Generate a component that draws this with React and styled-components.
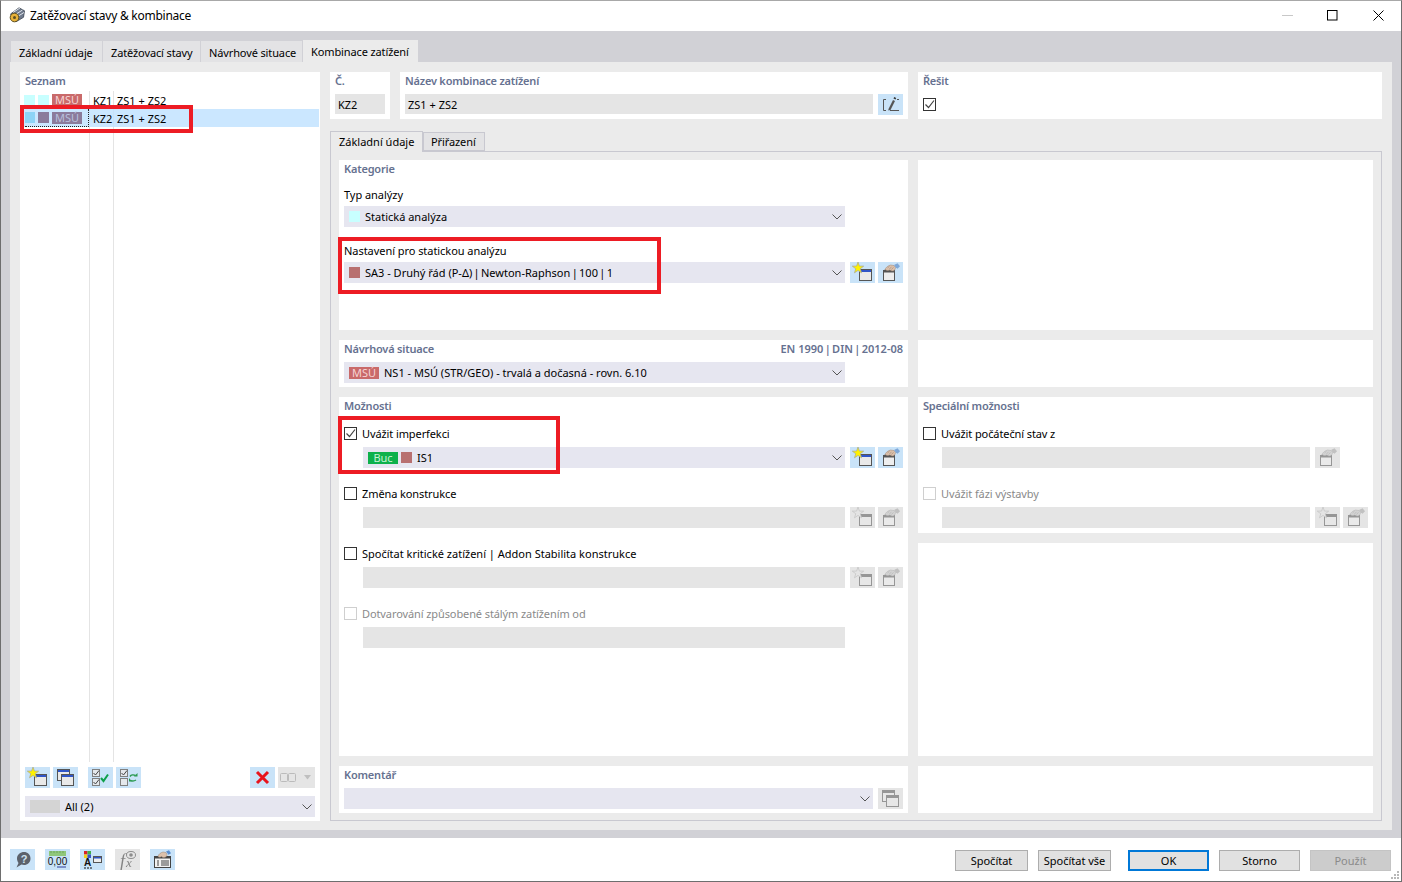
import React from "react";
import styled, { createGlobalStyle } from "styled-components";

const GlobalStyle = createGlobalStyle`
	html, body {
		margin: 0;
		padding: 0;
		background: #fff;
	}
	body {
		font-family: "Noto Sans", "Open Sans", sans-serif;
		font-size: 11px;
		color: #000;
	}
	* {
		box-sizing: border-box;
	}
`;

const Window = styled.div`
	position: relative;
	width: 1402px;
	height: 882px;
	display: flex;
	flex-direction: column;
	background: #fff;
	border: 1px solid #6e6e6e;
	border-top-color: #a8a8a8;
	overflow: hidden;
`;

const TitleBar = styled.div`
	height: 30px;
	display: flex;
	align-items: center;
	padding: 0 0 2px 8px;
	flex: none;
	background: #fff;
`;

const TitleText = styled.span`
	margin-left: 5px;
	font-size: 12px;
	letter-spacing: -0.25px;
`;

const WindowButtons = styled.div`
	margin-left: auto;
	display: flex;
	align-items: center;
	padding-right: 17px;
`;

const Band = styled.div`
	flex: 1;
	display: flex;
	flex-direction: column;
	background: #d1d1d6;
	padding: 10px 9px 8px 9px;
`;

const TabRow = styled.div`
	display: flex;
	align-items: flex-end;
	height: 21px;
	gap: 1px;
	margin-left: 1px;
	flex: none;
`;

const TopTab = styled.div`
	width: ${(p) => p.$w}px;
	height: ${(p) => (p.$active ? 22 : 21)}px;
	display: flex;
	align-items: center;
	padding-left: 8px;
	padding-top: 1px;
	letter-spacing: -0.12px;
	background: ${(p) => (p.$active ? "#ebebeb" : "#e3e3e5")};
	white-space: nowrap;
`;

const Body = styled.div`
	flex: 1;
	display: grid;
	grid-template-columns: 300px 1052px;
	column-gap: 10px;
	padding: 10px 10px 9px 10px;
	background: #ebebeb;
`;

const ListPanel = styled.div`
	display: flex;
	flex-direction: column;
	background: #fff;
	padding-bottom: 4px;
`;

const SectionTitle = styled.div`
	height: 18px;
	padding-bottom: 2px;
	display: flex;
	align-items: center;
	justify-content: space-between;
	font-weight: 600;
	letter-spacing: -0.2px;
	color: #667190;
	white-space: nowrap;
`;

const TitleNote = styled.span`
	letter-spacing: 0;
`;

const Sep = styled.span`
	margin: 0 -1.5px;
`;

const ListTitle = styled(SectionTitle)`
	height: 19px;
	padding-left: 5px;
	padding-bottom: 3px;
	flex: none;
`;

const ListBody = styled.div`
	flex: 1;
	margin-bottom: 5px;
	background-image: linear-gradient(#e4e4e4, #e4e4e4), linear-gradient(#e4e4e4, #e4e4e4);
	background-size: 1px 100%;
	background-position: 69px 0, 93px 0;
	background-repeat: no-repeat;
`;

const ListRow = styled.div`
	height: 18px;
	display: flex;
	align-items: center;
	padding-left: ${(p) => (p.$selected ? 5 : 4)}px;
	background: ${(p) => (p.$selected ? "rgba(190, 225, 255, 0.8)" : "transparent")};
	width: 299px;
`;

const Swatch = styled.span`
	width: ${(p) => p.$w || 11}px;
	height: ${(p) => p.$h || 11}px;
	margin-right: ${(p) => p.$gap ?? 3}px;
	background: ${(p) => p.$color};
	flex: none;
`;

const Badge = styled.span`
	width: ${(p) => p.$w || 30}px;
	height: 12px;
	margin-right: ${(p) => p.$gap ?? 3}px;
	display: flex;
	align-items: center;
	justify-content: center;
	font-size: 11px;
	line-height: 12px;
	color: ${(p) => p.$text || "#f6d4d4"};
	background: ${(p) => p.$color};
	flex: none;
`;

const FocusCell = styled.div`
	display: flex;
	align-items: center;
	width: 64px;
	height: 18px;
	border-bottom: 1px dotted #222;
	border-right: 1px dotted #222;
	flex: none;
`;

const PlainCell = styled.div`
	display: flex;
	align-items: center;
	width: 65px;
	flex: none;
`;

const CodeCell = styled.span`
	width: 24px;
	margin-left: 4px;
	white-space: nowrap;
	flex: none;
`;

const ListToolbar = styled.div`
	display: flex;
	align-items: center;
	padding: 0 5px;
	margin-bottom: 8px;
	flex: none;
`;

const ToolGroup = styled.div`
	display: flex;
	gap: 3px;
	margin-right: ${(p) => p.$gap || 0}px;
	margin-left: ${(p) => (p.$end ? "auto" : 0)};
`;

const IconButton = styled.div`
	width: ${(p) => p.$w || 25}px;
	height: 21px;
	display: flex;
	align-items: center;
	justify-content: center;
	background: ${(p) => (p.$off ? "#e5e5e5" : "#c9e3f8")};
	flex: none;

	svg {
		display: block;
		filter: ${(p) => (p.$off ? "grayscale(1) opacity(0.55)" : "none")};
	}
`;

const Select = styled.div`
	width: ${(p) => p.$w}px;
	height: 21px;
	margin-left: ${(p) => p.$indent || 0}px;
	display: flex;
	align-items: center;
	padding: 0 3px 0 5px;
	background: ${(p) => (p.$off ? "#e5e5e5" : "#e6e6f0")};
	white-space: nowrap;
	flex: none;

	> svg:last-child {
		margin-left: auto;
	}
`;

const ListSelect = styled(Select)`
	margin: 0 5px;
	width: 290px;
`;

const RightColumn = styled.div`
	display: flex;
	flex-direction: column;
`;

const HeaderRow = styled.div`
	display: grid;
	grid-template-columns: 60px 508px 464px;
	column-gap: 10px;
	height: 47px;
	flex: none;
`;

const Panel = styled.div`
	background: #fff;
	padding: 0 5px;
`;

const InputBox = styled.div`
	width: ${(p) => p.$w}px;
	height: 20px;
	display: flex;
	align-items: center;
	padding-left: 3px;
	background: #e5e5e5;
	flex: none;
`;

const HeaderLine = styled.div`
	display: flex;
	gap: 5px;
	margin-top: ${(p) => p.$top || 4}px;
`;

const InnerTabs = styled.div`
	display: flex;
	align-items: flex-end;
	height: 20px;
	margin-top: 12px;
	flex: none;
`;

const InnerTab = styled.div`
	width: ${(p) => p.$w}px;
	height: ${(p) => (p.$active ? 21 : 19)}px;
	display: flex;
	align-items: center;
	padding-left: ${(p) => (p.$active ? 8 : 7)}px;
	padding-bottom: ${(p) => (p.$active ? 1 : 0)}px;
	letter-spacing: ${(p) => (p.$active ? 0 : "-0.1px")};
	background: ${(p) => (p.$active ? "#ebebeb" : "#e3e3e5")};
	border: 1px solid #c8c8d0;
	border-bottom: ${(p) => (p.$active ? "none" : "1px solid #c8c8d0")};
	margin-bottom: ${(p) => (p.$active ? -1 : 0)}px;
	white-space: nowrap;
	position: relative;
`;

const InnerPanel = styled.div`
	flex: 1;
	display: grid;
	grid-template-columns: 569px 455px;
	grid-template-rows: 170px 47px 359px 47px;
	gap: 10px;
	padding: 8px 8px 7px 8px;
	border: 1px solid #c8c8d0;
`;

const RightStack = styled.div`
	display: flex;
	flex-direction: column;
	gap: 10px;
`;

const SpecialPanel = styled(Panel)`
	height: 136px;
	flex: none;
`;

const FillPanel = styled(Panel)`
	flex: 1;
`;

const FieldLabel = styled.div`
	height: 14px;
	display: flex;
	align-items: center;
	margin-top: ${(p) => p.$top}px;
	margin-bottom: 5px;
	letter-spacing: -0.05px;
`;

const ControlRow = styled.div`
	display: flex;
	align-items: center;
	gap: 5px;
	margin-top: ${(p) => p.$top || 0}px;
`;

const CheckRow = styled.div`
	height: 14px;
	display: flex;
	align-items: center;
	gap: 5px;
	margin-top: ${(p) => p.$top}px;
	margin-bottom: 7px;
	letter-spacing: ${(p) => (p.$wide ? 0 : "-0.1px")};
	color: ${(p) => (p.$off ? "#8a8a8a" : "#000")};
`;

const CheckBox = styled.span`
	width: 13px;
	height: 13px;
	display: flex;
	align-items: center;
	justify-content: center;
	border: 1px solid ${(p) => (p.$off ? "#cfcfcf" : "#333")};
	background: #fff;
	flex: none;
`;

const Gap = styled.span`
	width: ${(p) => p.$w}px;
	flex: none;
`;

const Footer = styled.div`
	height: 43px;
	display: flex;
	align-items: flex-start;
	padding: 11px 10px 0 9px;
	flex: none;
	background: #fff;
`;

const FooterTools = styled.div`
	display: flex;
	gap: 10px;
`;

const FooterButtons = styled.div`
	margin-left: auto;
	margin-top: 1px;
	display: flex;
	gap: 10px;
`;

const DialogButton = styled.div`
	width: ${(p) => p.$w || 81}px;
	height: 21px;
	margin-right: ${(p) => p.$gap || 0}px;
	display: flex;
	align-items: center;
	justify-content: center;
	background: ${(p) => (p.$off ? "#cccccc" : "#e1e1e1")};
	color: ${(p) => (p.$off ? "#8a8a8a" : "#000")};
	border: ${(p) => (p.$primary ? "2px solid #0078d7" : p.$off ? "1px solid #c4c4c4" : "1px solid #adadad")};
`;

const Grip = styled.svg`
	position: absolute;
	right: 1px;
	bottom: 1px;
`;

const Mark = styled.div`
	position: absolute;
	left: ${(p) => p.$x}px;
	top: ${(p) => p.$y}px;
	width: ${(p) => p.$w}px;
	height: ${(p) => p.$h}px;
	border: 4px solid #ed1c24;
	pointer-events: none;
`;

const Chevron = () => (
	<svg width="10" height="6" viewBox="0 0 10 6">
		<path d="M.5.5L5 5 9.500.5" fill="none" stroke="#555" />
	</svg>
);

const CheckGlyph = () => (
	<svg width="11" height="11" viewBox="0 0 11 11">
		<path d="M1.5 5.5l3 3L10 1.5" fill="none" stroke="#444" strokeWidth="1.2" />
	</svg>
);

const MiniWindow = ({ x, y, w = 12, h = 11 }) => (
	<>
		<rect x={x + 0.5} y={y + 0.5} width={w} height={h} fill="#e9e9e9" stroke="#555" />
		<rect x={x + 1} y={y + 1} width={w - 1} height="2" fill="#2f55c8" />
	</>
);

const NewIcon = () => (
	<svg width="25" height="21" viewBox="0 0 25 21">
		<MiniWindow x={9} y={7} />
		<path
			d="M8 0l1.410 4.060 4.290.090-3.420 2.590 1.250 4.110L8 8.400l-3.530 2.450 1.250-4.110-3.430-2.590 4.300-.090z"
			fill="#fff200"
			stroke="#a8a890"
			strokeWidth=".7"
		/>
	</svg>
);

const LibraryIcon = () => (
	<svg width="25" height="21" viewBox="0 0 25 21">
		<rect x="5.500" y="8.500" width="11" height="10" fill="#eee" stroke="#555" />
		<rect x="6" y="9" width="10" height="1.500" fill="#555" />
		<path d="M7 8c.5-2.500 2.500-4 5.500-5l3.500.5 1.500 2c0 2-1.500 3.500-3 3.500-1.500 0-2-.6-2.500-1.200-1 .8-3.500 1.200-5-.8z" fill="#dcc0aa" stroke="#9a8474" strokeWidth=".5" />
		<path d="M9.500 6l2-1.800M11.500 7l2-2.200M13.500 7.500l2-2.200" stroke="#9a8474" strokeWidth=".6" />
		<path d="M16 3l3.500-1.800 2.500 3-2.500 2.500-2-1.500z" fill="#7fa8d8" />
	</svg>
);

const EditIcon = () => (
	<svg width="25" height="21" viewBox="0 0 25 21">
		<path d="M8 5.500H5.500v11H8M12 16.500h9" fill="none" stroke="#555" />
		<path d="M10.500 15l4.500-9 2 1-4.500 9-2.200.600z" fill="#555" />
		<path d="M15.500 4.500l.7-1.500 2 1-.7 1.500z" fill="#333" />
		<path d="M19 5.500h2" stroke="#555" />
	</svg>
);

const CopyIcon = () => (
	<svg width="25" height="21" viewBox="0 0 25 21">
		<MiniWindow x={4} y={2} />
		<MiniWindow x={8} y={7} />
	</svg>
);

const SmallCheck = ({ x, y, on = true }) => (
	<>
		<rect x={x + 0.5} y={y + 0.5} width="7" height="7" fill="#e4e8ec" stroke="#808080" />
		{on && <path d={`M${x + 1.5} ${y + 4}l2 2 3.500-4.500`} fill="none" stroke="#444" />}
	</>
);

const CheckAllIcon = () => (
	<svg width="25" height="21" viewBox="0 0 25 21">
		<SmallCheck x={4} y={2} />
		<SmallCheck x={4} y={11} />
		<path d="M13 11l2.500 3 4.500-6.500" fill="none" stroke="#0fa04a" strokeWidth="2" />
	</svg>
);

const SwapIcon = () => (
	<svg width="25" height="21" viewBox="0 0 25 21">
		<SmallCheck x={4} y={2} />
		<SmallCheck x={4} y={11} on={false} />
		<path d="M14 9.500c1-1.500 3.500-2 5.500-1M20 13c-2 1.200-4 1.200-5.500.300" fill="none" stroke="#2a9a50" strokeWidth="1.400" />
		<path d="M21.500 6v3.500h-3.500zM13 11v3.500h3z" fill="#2a9a50" />
	</svg>
);

const DeleteIcon = () => (
	<svg width="25" height="21" viewBox="0 0 25 21">
		<path d="M7 5l11 11M18 5L7 16" stroke="#e8141c" strokeWidth="3" />
	</svg>
);

const SplitIcon = () => (
	<svg width="37" height="21" viewBox="0 0 37 21">
		<rect x="2.500" y="6.500" width="7" height="8" rx="1" fill="none" stroke="#999" />
		<rect x="10.500" y="6.500" width="7" height="8" rx="1" fill="none" stroke="#999" />
		<path d="M26 8h7l-3.500 4.500z" fill="#a0a0a0" />
	</svg>
);

const HelpIcon = () => (
	<svg width="25" height="21" viewBox="0 0 25 21">
		<path d="M14 3c3.500 0 6.500 2.500 6.500 6.500S17.500 16 14 16c-.9 0-1.800-.2-2.500-.5L6.500 18.500l2-4.500C7.500 12.800 7 11 7 9.500 7 5.500 10.500 3 14 3z" fill="#5c626c" />
		<text x="14" y="13.500" fontSize="11" fontWeight="700" fontFamily="Liberation Sans, sans-serif" fill="#cfe2f2" textAnchor="middle">?</text>
	</svg>
);

const UnitsIcon = () => (
	<svg width="25" height="21" viewBox="0 0 25 21">
		<rect x="4" y="2" width="17" height="5" fill="#8fc77a" />
		<path d="M6 2v2M9 2v2M12 2v2M15 2v2M18 2v2" stroke="#5f9a50" strokeWidth=".7" />
		<text x="12.500" y="16" fontSize="10" fontFamily="Liberation Sans, sans-serif" fill="#111" textAnchor="middle">0,00</text>
		<path d="M12 18h9" stroke="#2f3f9a" />
	</svg>
);

const ColorsIcon = () => (
	<svg width="25" height="21" viewBox="0 0 25 21">
		<rect x="4" y="2" width="3.500" height="3.500" fill="#d8232a" />
		<rect x="7.500" y="2" width="3.500" height="3.500" fill="#3fae49" />
		<rect x="4" y="5.500" width="3.500" height="3.500" fill="#f2d01c" />
		<rect x="7.500" y="5.500" width="3.500" height="3.500" fill="#3a55c8" />
		<text x="7.500" y="17" fontSize="10" fontWeight="700" fontFamily="Liberation Sans, sans-serif" fill="#111" textAnchor="middle">A</text>
		<path d="M4 19h2M7 19h2M10 19h2" stroke="#111" />
		<rect x="13.500" y="7.500" width="8" height="6" fill="#eee" stroke="#555" />
		<rect x="14" y="8" width="7" height="1.500" fill="#2f55c8" />
	</svg>
);

const FormulaIcon = () => (
	<svg width="25" height="21" viewBox="0 0 25 21">
		<text x="5" y="18" fontSize="18" fontStyle="italic" fontFamily="Liberation Serif, serif" fill="#333">f</text>
		<text x="11" y="18" fontSize="13" fontStyle="italic" fontFamily="Liberation Serif, serif" fill="#333">x</text>
		<ellipse cx="16" cy="6" rx="4.500" ry="3.500" fill="none" stroke="#444" />
		<circle cx="16" cy="6" r="1.800" fill="#444" />
	</svg>
);

const ReportIcon = () => (
	<svg width="25" height="21" viewBox="0 0 25 21">
		<rect x="4.500" y="7.500" width="16" height="11" fill="#f2f2f2" stroke="#444" />
		<rect x="5" y="8" width="15" height="1.500" fill="#444" />
		<path d="M7 12h2M7 14h2M7 16h2M11 12h8M11 14h8M11 16h8" stroke="#444" />
		<path d="M8 7.500c.5-2.500 3-4 5-4.500l3 .5 1 2c0 2-1.500 3-3 3-1.500 0-2-.5-2.500-1-1 .8-2.500 1-3.500 0z" fill="#dcc0aa" stroke="#9a8474" strokeWidth=".5" />
		<path d="M16 2.500l3-1.300 2 3-2.500 1.500z" fill="#5a8ed0" />
	</svg>
);

const AppIcon = () => (
	<svg width="16" height="16" viewBox="0 0 16 16">
		<path d="M1.500 7L10 .8l5.500 3-1 6.500-7.500 4.500z" fill="#6f7a8c" stroke="#39414e" strokeWidth=".8" />
		<path d="M4 5.500L11 1M6.500 7.500L13.500 3M8.500 9.500L15 5.500" stroke="#dfe4ea" />
		<circle cx="5.500" cy="10.500" r="4.300" fill="#e8b23a" stroke="#5c4f20" />
		<circle cx="5.500" cy="10.500" r="1.500" fill="#5c4f20" />
	</svg>
);

const MaximizeIcon = () => (
	<svg width="11" height="11" viewBox="0 0 11 11">
		<rect x=".5" y=".5" width="9.500" height="9.500" fill="none" stroke="#000" />
	</svg>
);

const CloseIcon = () => (
	<svg width="11" height="11" viewBox="0 0 11 11">
		<path d="M.5.5l10 10M10.500.5l-10 10" stroke="#000" />
	</svg>
);

const MinimizeIcon = () => (
	<svg width="11" height="11" viewBox="0 0 11 11">
		<path d="M0 5.500h11" stroke="#c8c8c8" />
	</svg>
);

const App = () => {
	return (
		<>
			<GlobalStyle />
			<Window>
				<TitleBar>
					<AppIcon />
					<TitleText>Zatěžovací stavy &amp; kombinace</TitleText>
					<WindowButtons>
						<MinimizeIcon />
						<Gap $w={34} />
						<MaximizeIcon />
						<Gap $w={35} />
						<CloseIcon />
					</WindowButtons>
				</TitleBar>
				<Band>
					<TabRow>
						<TopTab $w={91}>Základní údaje</TopTab>
						<TopTab $w={97}>Zatěžovací stavy</TopTab>
						<TopTab $w={101}>Návrhové situace</TopTab>
						<TopTab $w={115} $active>Kombinace zatížení</TopTab>
					</TabRow>
					<Body>
						<ListPanel>
							<ListTitle>Seznam</ListTitle>
							<ListBody>
								<ListRow>
									<PlainCell>
										<Swatch $color="#c8ffff" />
										<Swatch $color="#c8ffff" />
										<Badge $color="#c96a6a">MSÚ</Badge>
									</PlainCell>
									<CodeCell>KZ1</CodeCell>
									<span>ZS1 + ZS2</span>
								</ListRow>
								<ListRow $selected>
									<FocusCell>
										<Swatch $color="#8dd3f6" $w={10} />
										<Swatch $color="#8b7b9b" />
										<Badge $color="#8b7b9b" $text="#b8c0dc">MSÚ</Badge>
									</FocusCell>
									<CodeCell>KZ2</CodeCell>
									<span>ZS1 + ZS2</span>
								</ListRow>
							</ListBody>
							<ListToolbar>
								<ToolGroup $gap={10}>
									<IconButton><NewIcon /></IconButton>
									<IconButton><CopyIcon /></IconButton>
								</ToolGroup>
								<ToolGroup>
									<IconButton><CheckAllIcon /></IconButton>
									<IconButton><SwapIcon /></IconButton>
								</ToolGroup>
								<ToolGroup $end>
									<IconButton><DeleteIcon /></IconButton>
									<IconButton $w={37} $off><SplitIcon /></IconButton>
								</ToolGroup>
							</ListToolbar>
							<ListSelect>
								<Swatch $color="#d4d4d4" $w={30} $h={13} $gap={5} />
								All (2)
								<Chevron />
							</ListSelect>
						</ListPanel>
						<RightColumn>
							<HeaderRow>
								<Panel>
									<SectionTitle>Č.</SectionTitle>
									<HeaderLine>
										<InputBox $w={50}>KZ2</InputBox>
									</HeaderLine>
								</Panel>
								<Panel>
									<SectionTitle>Název kombinace zatížení</SectionTitle>
									<HeaderLine>
										<InputBox $w={468}>ZS1 + ZS2</InputBox>
										<IconButton><EditIcon /></IconButton>
									</HeaderLine>
								</Panel>
								<Panel>
									<SectionTitle>Řešit</SectionTitle>
									<HeaderLine $top={8}>
										<CheckBox><CheckGlyph /></CheckBox>
									</HeaderLine>
								</Panel>
							</HeaderRow>
							<InnerTabs>
								<InnerTab $w={93} $active>Základní údaje</InnerTab>
								<InnerTab $w={62}>Přiřazení</InnerTab>
							</InnerTabs>
							<InnerPanel>
								<Panel>
									<SectionTitle>Kategorie</SectionTitle>
									<FieldLabel $top={9}>Typ analýzy</FieldLabel>
									<ControlRow>
										<Select $w={501}>
											<Swatch $color="#c8ffff" $gap={5} />
											Statická analýza
											<Chevron />
										</Select>
									</ControlRow>
									<FieldLabel $top={16}>Nastavení pro statickou analýzu</FieldLabel>
									<ControlRow>
										<Select $w={501}>
											<Swatch $color="#b87070" $gap={5} />
											<span>
												SA3 - Druhý řád (P-Δ) <Sep>|</Sep> Newton-Raphson <Sep>|</Sep> 100 <Sep>|</Sep> 1
											</span>
											<Chevron />
										</Select>
										<ToolGroup>
											<IconButton><NewIcon /></IconButton>
											<IconButton><LibraryIcon /></IconButton>
										</ToolGroup>
									</ControlRow>
								</Panel>
								<Panel />
								<Panel>
									<SectionTitle>
										Návrhová situace
										<TitleNote>
											EN 1990 <Sep>|</Sep> DIN <Sep>|</Sep> 2012-08
										</TitleNote>
									</SectionTitle>
									<ControlRow $top={4}>
										<Select $w={501}>
											<Badge $color="#c96a6a" $gap={5}>MSÚ</Badge>
											NS1 - MSÚ (STR/GEO) - trvalá a dočasná - rovn. 6.10
											<Chevron />
										</Select>
									</ControlRow>
								</Panel>
								<Panel />
								<Panel>
									<SectionTitle>Možnosti</SectionTitle>
									<CheckRow $top={11}>
										<CheckBox><CheckGlyph /></CheckBox>
										Uvážit imperfekci
									</CheckRow>
									<ControlRow>
										<Select $w={482} $indent={19}>
											<Badge $color="#0db14b" $text="#c6f2d4" $gap={3}>Buc</Badge>
											<Swatch $color="#b87070" $gap={5} />
											IS1
											<Chevron />
										</Select>
										<ToolGroup>
											<IconButton><NewIcon /></IconButton>
											<IconButton><LibraryIcon /></IconButton>
										</ToolGroup>
									</ControlRow>
									<CheckRow $top={18}>
										<CheckBox />
										Změna konstrukce
									</CheckRow>
									<ControlRow>
										<Select $w={482} $indent={19} $off />
										<ToolGroup>
											<IconButton $off><NewIcon /></IconButton>
											<IconButton $off><LibraryIcon /></IconButton>
										</ToolGroup>
									</ControlRow>
									<CheckRow $top={18} $wide>
										<CheckBox />
										Spočítat kritické zatížení | Addon Stabilita konstrukce
									</CheckRow>
									<ControlRow>
										<Select $w={482} $indent={19} $off />
										<ToolGroup>
											<IconButton $off><NewIcon /></IconButton>
											<IconButton $off><LibraryIcon /></IconButton>
										</ToolGroup>
									</ControlRow>
									<CheckRow $top={18} $off>
										<CheckBox $off />
										Dotvarování způsobené stálým zatížením od
									</CheckRow>
									<ControlRow>
										<Select $w={482} $indent={19} $off />
									</ControlRow>
								</Panel>
								<RightStack>
									<SpecialPanel>
										<SectionTitle>Speciální možnosti</SectionTitle>
										<CheckRow $top={11}>
											<CheckBox />
											Uvážit počáteční stav z
										</CheckRow>
										<ControlRow>
											<Select $w={368} $indent={19} $off />
											<IconButton $off><LibraryIcon /></IconButton>
										</ControlRow>
										<CheckRow $top={18} $off>
											<CheckBox $off />
											Uvážit fázi výstavby
										</CheckRow>
										<ControlRow>
											<Select $w={368} $indent={19} $off />
											<ToolGroup>
												<IconButton $off><NewIcon /></IconButton>
												<IconButton $off><LibraryIcon /></IconButton>
											</ToolGroup>
										</ControlRow>
									</SpecialPanel>
									<FillPanel />
								</RightStack>
								<Panel>
									<SectionTitle>Komentář</SectionTitle>
									<ControlRow $top={4}>
										<Select $w={529}>
											<Chevron />
										</Select>
										<IconButton $off><CopyIcon /></IconButton>
									</ControlRow>
								</Panel>
								<Panel />
							</InnerPanel>
						</RightColumn>
					</Body>
				</Band>
				<Footer>
					<FooterTools>
						<IconButton><HelpIcon /></IconButton>
						<IconButton><UnitsIcon /></IconButton>
						<IconButton><ColorsIcon /></IconButton>
						<IconButton $off><FormulaIcon /></IconButton>
						<IconButton><ReportIcon /></IconButton>
					</FooterTools>
					<FooterButtons>
						<DialogButton $w={73}>Spočítat</DialogButton>
						<DialogButton $w={73} $gap={7}>Spočítat vše</DialogButton>
						<DialogButton $primary>OK</DialogButton>
						<DialogButton>Storno</DialogButton>
						<DialogButton $off>Použít</DialogButton>
					</FooterButtons>
				</Footer>
				<Grip width="10" height="10" viewBox="0 0 10 10">
					<path d="M7 1h2v2H7zM4 4h2v2H4zM7 4h2v2H7zM1 7h2v2H1zM4 7h2v2H4zM7 7h2v2H7z" fill="#b8b8b8" />
				</Grip>
				<Mark $x={19} $y={104} $w={173} $h={28} />
				<Mark $x={337} $y={236} $w={323} $h={57} />
				<Mark $x={337} $y={415} $w={222} $h={58} />
			</Window>
		</>
	);
};

export default App;
